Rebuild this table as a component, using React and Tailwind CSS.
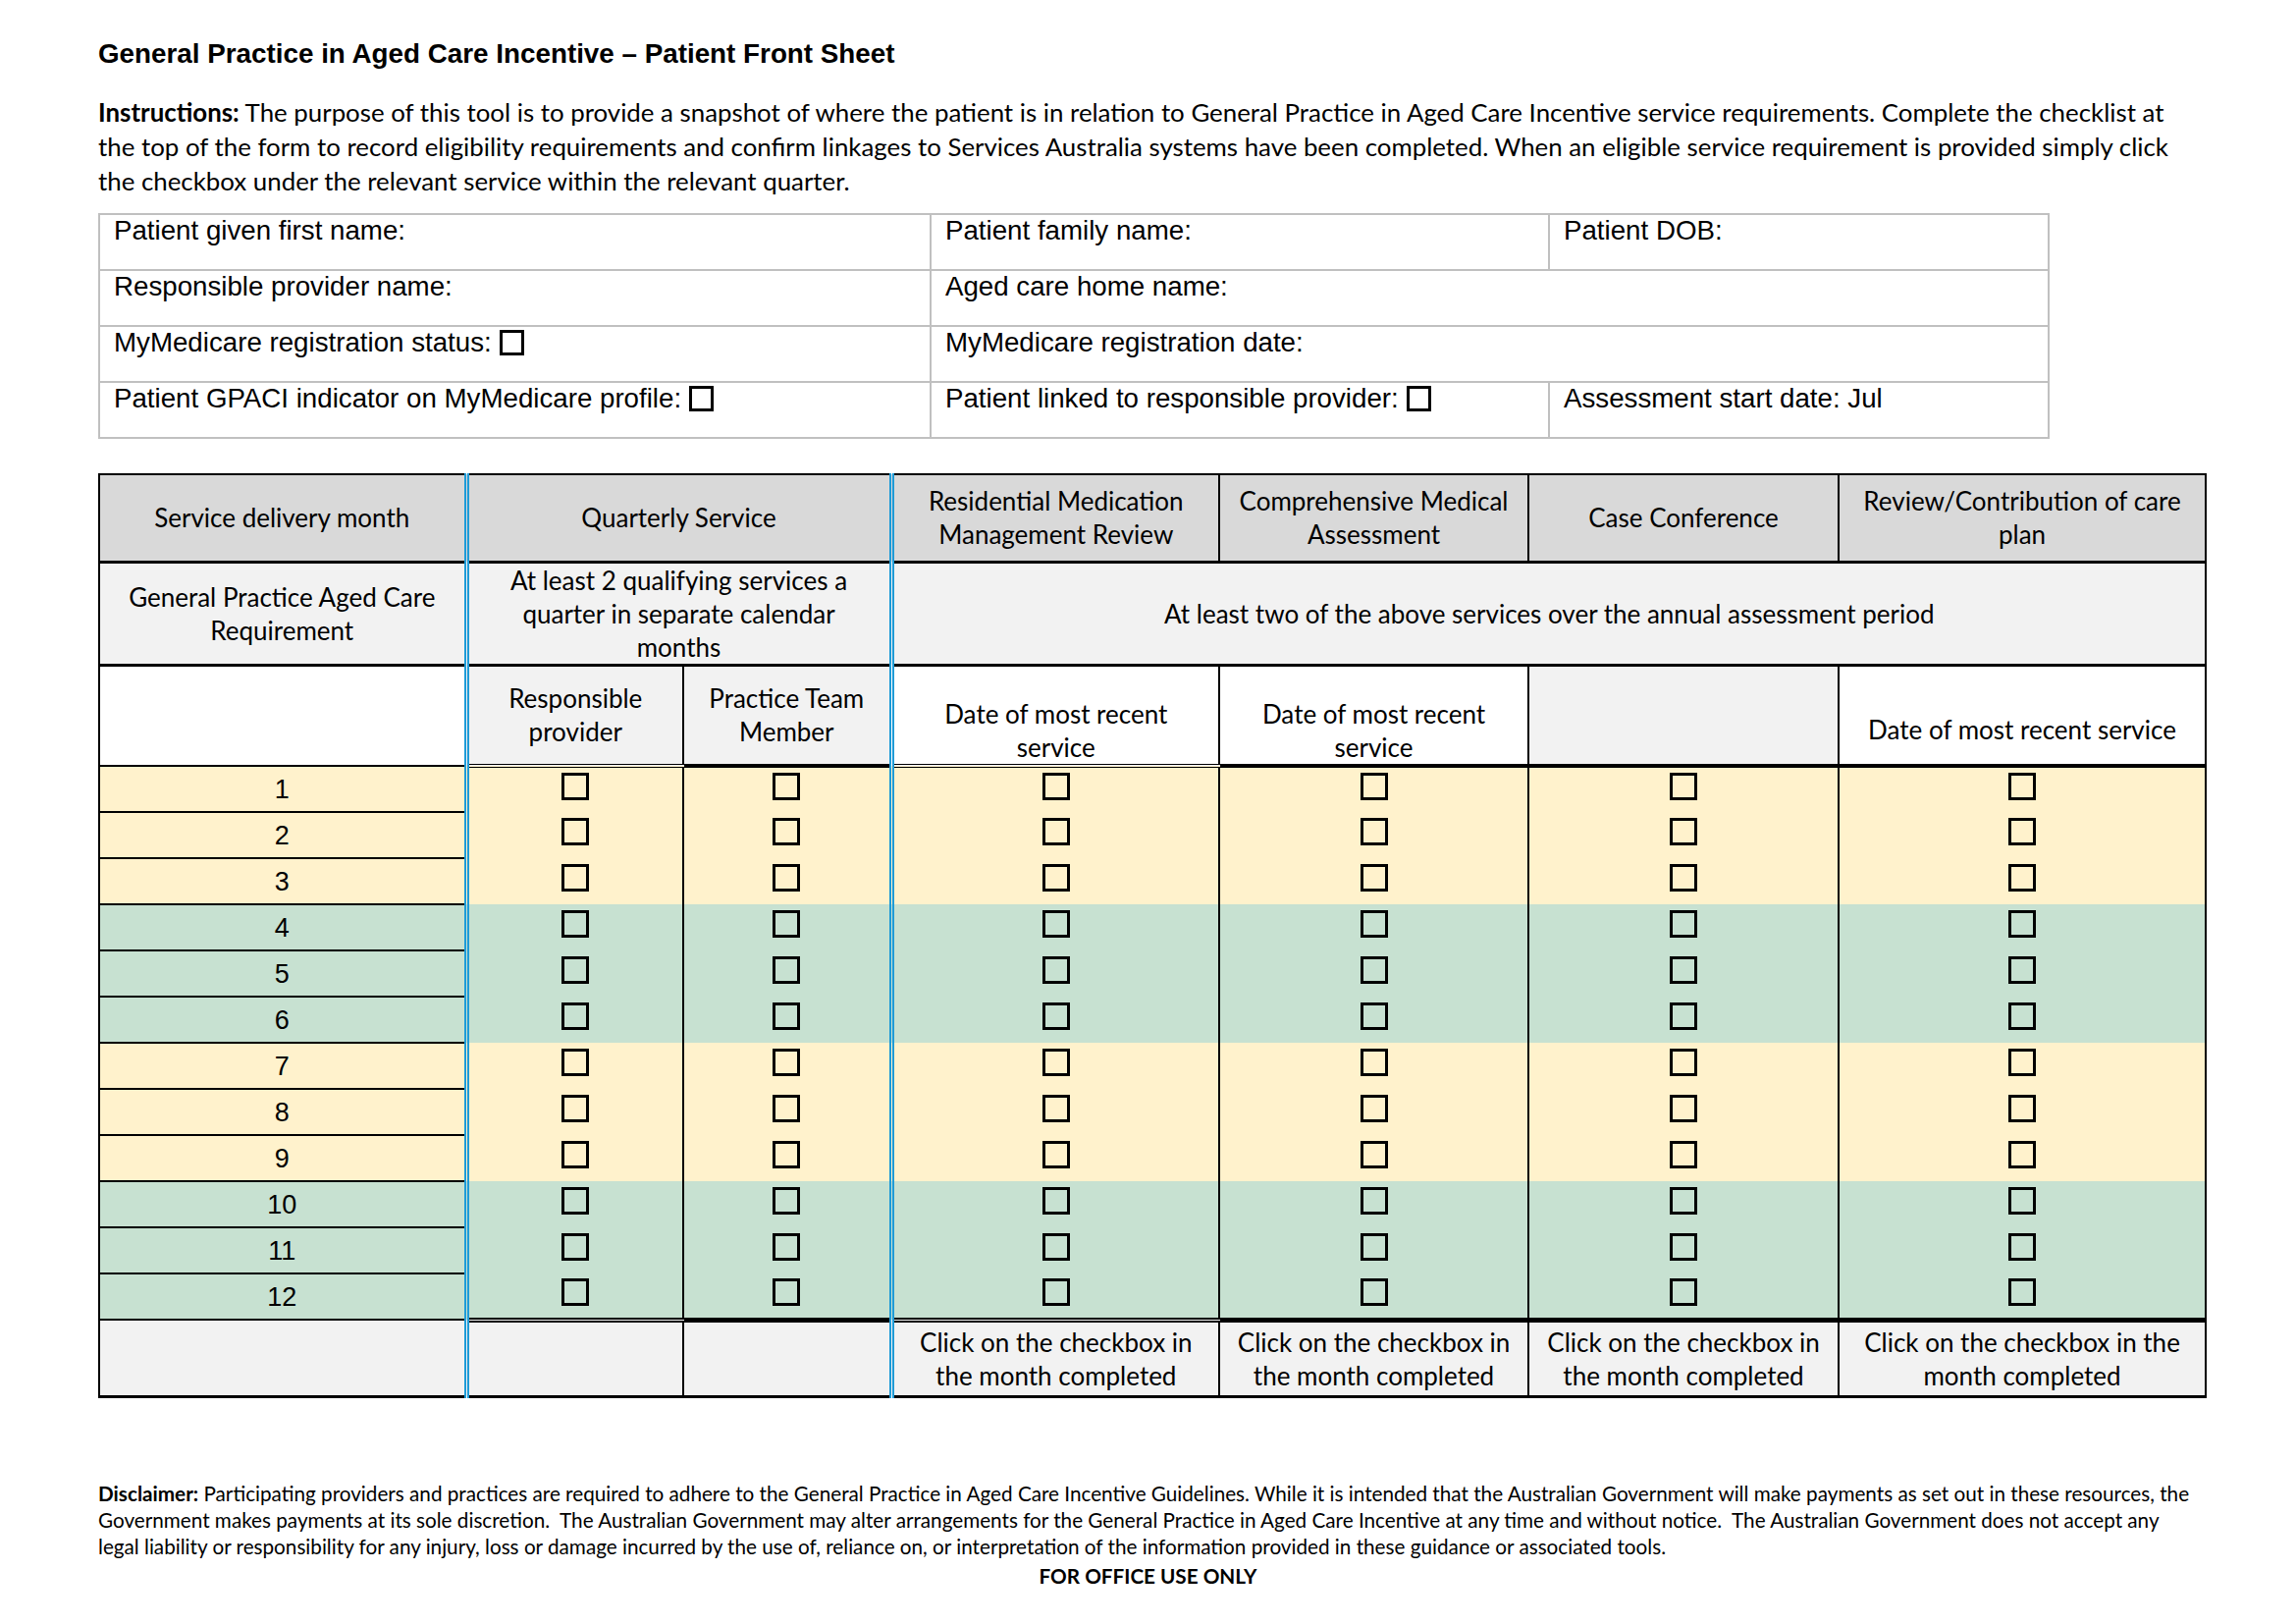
const months = [1, 2, 3, 4, 5, 6, 7, 8, 9, 10, 11, 12];

const Box = ({ small }) =>
  small ? (
    <span className="inline-block w-[25px] h-[26px] border-[3px] border-black align-[-4px] ml-[8px]" />
  ) : (
    <span className="inline-block w-[28px] h-[28px] border-[3px] border-black" />
  );

function PatientTable() {
  const cell = "border-2 border-[#c0c0c0] align-top px-[14px] h-[57px]";
  return (
    <table className="border-collapse table-fixed w-[1986px] mt-[15px] font-['Liberation_Sans',Arial,sans-serif] text-[27.7px] leading-[32px]">
      <colgroup>
        <col className="w-[847px]" />
        <col className="w-[630px]" />
        <col className="w-[509px]" />
      </colgroup>
      <tbody>
        <tr>
          <td className={cell}>Patient given first name:</td>
          <td className={cell}>Patient family name:</td>
          <td className={cell}>Patient DOB:</td>
        </tr>
        <tr>
          <td className={cell}>Responsible provider name:</td>
          <td className={cell} colSpan={2}>Aged care home name:</td>
        </tr>
        <tr>
          <td className={cell}>MyMedicare registration status:<Box small /></td>
          <td className={cell} colSpan={2}>MyMedicare registration date:</td>
        </tr>
        <tr>
          <td className={cell}>Patient GPACI indicator on MyMedicare profile:<Box small /></td>
          <td className={cell}>Patient linked to responsible provider:<Box small /></td>
          <td className={cell}>Assessment start date: Jul</td>
        </tr>
      </tbody>
    </table>
  );
}

function ServiceTable() {
  const blueL = "border-l-[5px] border-l-[#1e9bd7] border-double";
  const blueR = "border-r-[5px] border-r-[#1e9bd7] border-double";
  const line = "border-l-2 border-l-black";
  return (
    <table className="border-collapse table-fixed w-[2146px] mt-[35px] border-2 border-black border-b-[3px] text-center">
      <colgroup>
        <col className="w-[374px]" />
        <col className="w-[221px]" />
        <col className="w-[212px]" />
        <col className="w-[334px]" />
        <col className="w-[315px]" />
        <col className="w-[316px]" />
        <col className="w-[374px]" />
      </colgroup>
      <tbody>
        {/* Header */}
        <tr className="h-[89px] bg-[#d9d9d9] border-b-[3px] border-b-black">
          <td>Service delivery month</td>
          <td colSpan={2} className={`${blueL} ${blueR}`}>Quarterly Service</td>
          <td>Residential Medication<br />Management Review</td>
          <td className={line}>Comprehensive Medical<br />Assessment</td>
          <td className={line}>Case Conference</td>
          <td className={line}>Review/Contribution of care<br />plan</td>
        </tr>

        {/* Requirement */}
        <tr className="h-[101px] bg-[#f2f2f2] border-b-[3px] border-b-black">
          <td>General Practice Aged Care<br />Requirement</td>
          <td colSpan={2} className={`${blueL} ${blueR}`}>
            At least 2 qualifying services a<br />quarter in separate calendar<br />months
          </td>
          <td colSpan={4}>At least two of the above services over the annual assessment period</td>
        </tr>

        {/* Sub header */}
        <tr className="h-[103px]">
          <td className="bg-white border-b-2 border-b-black" />
          <td className={`bg-[#f2f2f2] border-b-4 border-b-black ${blueL}`}>Responsible<br />provider</td>
          <td className={`bg-[#f2f2f2] border-b-4 border-b-black ${line}`}>Practice Team<br />Member</td>
          <td className={`bg-white border-b-4 border-b-black align-bottom ${blueL}`}>Date of most recent<br />service</td>
          <td className={`bg-white border-b-4 border-b-black align-bottom ${line}`}>Date of most recent<br />service</td>
          <td className={`bg-[#f2f2f2] border-b-4 border-b-black ${line}`} />
          <td className={`bg-white border-b-4 border-b-black align-bottom pb-[18px] ${line}`}>Date of most recent service</td>
        </tr>

        {/* Months */}
        {months.map((m) => {
          const q = Math.floor((m - 1) / 3);
          const bg = q % 2 === 0 ? "bg-[#fff2cc]" : "bg-[#c7e1d1]";
          return (
            <tr key={m} className={`h-[47px] ${bg}`}>
              <td className={`font-['Liberation_Sans',Arial,sans-serif] text-[27px] ${m < 12 ? "border-b-2 border-b-black" : ""}`}>
                {m}
              </td>
              <td className={blueL}><Box /></td>
              <td className={line}><Box /></td>
              <td className={blueL}><Box /></td>
              <td className={line}><Box /></td>
              <td className={line}><Box /></td>
              <td className={line}><Box /></td>
            </tr>
          );
        })}

        {/* Footer */}
        <tr className="h-[78px] bg-[#f2f2f2]">
          <td className="border-t-2 border-t-black" />
          <td className={`border-t-[5px] border-t-black ${blueL}`} />
          <td className={`border-t-[5px] border-t-black ${line}`} />
          <td className={`border-t-[5px] border-t-black ${blueL}`}>Click on the checkbox in<br />the month completed</td>
          <td className={`border-t-[5px] border-t-black ${line}`}>Click on the checkbox in<br />the month completed</td>
          <td className={`border-t-[5px] border-t-black ${line}`}>Click on the checkbox in<br />the month completed</td>
          <td className={`border-t-[5px] border-t-black ${line}`}>Click on the checkbox in the<br />month completed</td>
        </tr>
      </tbody>
    </table>
  );
}

export default function App() {
  return (
    <div className="w-[2339px] min-h-[1654px] bg-white text-black pt-[39px] px-[100px] font-['Lato','Liberation_Sans',sans-serif] text-[26px] leading-[34px]">
      <h1 className="font-['Liberation_Sans',Arial,sans-serif] font-bold text-[27.8px] leading-[32px]">
        General Practice in Aged Care Incentive – Patient Front Sheet
      </h1>

      <p className="mt-[26px] leading-[35px] text-[25.85px]">
        <span className="font-bold">Instructions:</span> The purpose of this tool is to provide a snapshot of where the patient is in relation to General Practice in Aged Care Incentive service requirements. Complete the checklist at
        <br />
        the top of the form to record eligibility requirements and confirm linkages to Services Australia systems have been completed. When an eligible service requirement is provided simply click
        <br />
        the checkbox under the relevant service within the relevant quarter.
      </p>

      <PatientTable />
      <ServiceTable />

      <div className="mt-[84px] text-[20.7px] leading-[27px]">
        <p>
          <span className="font-bold">Disclaimer:</span> Participating providers and practices are required to adhere to the General Practice in Aged Care Incentive Guidelines. While it is intended that the Australian Government will make payments as set out in these resources, the
          <br />
          Government makes payments at its sole discretion.&nbsp; The Australian Government may alter arrangements for the General Practice in Aged Care Incentive at any time and without notice.&nbsp; The Australian Government does not accept any
          <br />
          legal liability or responsibility for any injury, loss or damage incurred by the use of, reliance on, or interpretation of the information provided in these guidance or associated tools.
        </p>
        <p className="mt-[3px] text-center font-bold">FOR OFFICE USE ONLY</p>
      </div>
    </div>
  );
}
